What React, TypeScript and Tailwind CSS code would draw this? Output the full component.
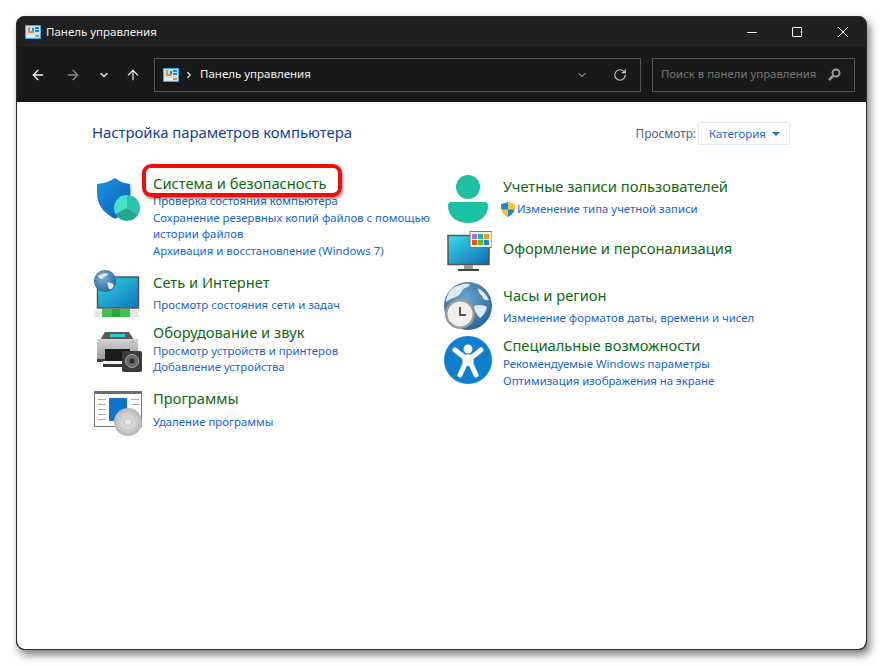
import { ArrowLeft, ArrowRight, ArrowUp, ChevronDown, ChevronRight, RotateCw } from "lucide-react"
import type { ReactNode } from "react"

// Small control panel glyph used in the title bar and address box
function PanelIcon() {
  return (
    <svg width="16" height="14" viewBox="0 0 16 14" className="block shrink-0">
      <rect x="0" y="0" width="16" height="14" fill="#3aa7ee" />
      <rect x="1" y="1" width="14" height="12" fill="#bfe6fb" />
      <rect x="3" y="2" width="2" height="6" fill="#e8912d" />
      <rect x="3" y="6" width="6" height="2" fill="#e8912d" />
      <rect x="7" y="3" width="2" height="3" fill="#2f7fc9" />
      <rect x="10" y="2" width="4" height="2" fill="#2f7fc9" />
      <rect x="10" y="5" width="4" height="2" fill="#2f7fc9" />
      <rect x="2" y="10" width="8" height="2" fill="#f4f4f4" />
      <rect x="10" y="10" width="4" height="2" fill="#e8912d" />
    </svg>
  )
}

function ShieldIcon() {
  return (
    <svg width="48" height="48" viewBox="0 0 48 48" className="block">
      <defs>
        <linearGradient id="sh" x1="0" y1="0" x2="1" y2="1">
          <stop offset="0" stopColor="#1b94e4" />
          <stop offset="1" stopColor="#0b5fb0" />
        </linearGradient>
      </defs>
      <path d="M21 3c4 3.500 9.500 5.500 15 6 0 0 .5 1 .5 9 0 14-7 21-15.500 26C12 39 3 32 3 18c0-8 0-9 0-9 7-.5 13-2.500 18-6z" fill="url(#sh)" />
      <path d="M33 33V20a13 13 0 0 1 11.260 19.500z" fill="#2cc4ac" />
      <path d="M33 33V20a13 13 0 0 0-11.260 19.500z" fill="#48e2cb" />
      <path d="M33 33l11.260 6.500A13 13 0 0 1 21.740 39.500z" fill="#1fa88f" />
    </svg>
  )
}

function NetworkIcon() {
  return (
    <svg width="48" height="48" viewBox="0 0 48 48" className="block">
      <defs>
        <linearGradient id="scr" x1="0" y1="0" x2="1" y2="1">
          <stop offset="0" stopColor="#33d3e6" />
          <stop offset="1" stopColor="#0f76b8" />
        </linearGradient>
        <radialGradient id="glb" cx="0.4" cy="0.35" r="0.7">
          <stop offset="0" stopColor="#7fb6d8" />
          <stop offset="1" stopColor="#235f94" />
        </radialGradient>
      </defs>
      <rect x="3.500" y="7" width="41" height="31" fill="url(#scr)" stroke="#555" strokeWidth="1.500" />
      <rect x="0" y="40" width="45" height="7" fill="#e6e6e6" />
      <rect x="8" y="39" width="28" height="8" fill="#3fc24f" />
      <rect x="18" y="39" width="8" height="8" fill="#2aa63b" />
      <circle cx="11" cy="11" r="11" fill="url(#glb)" />
      <path d="M4 6c3-2 8-4 10-2-1 3-5 2-6 5-2 0-3-1-4-3zM13 13c3-1 5 0 7 2-1 3-3 5-5 4z" fill="#e4eef5" />
    </svg>
  )
}

function PrinterIcon() {
  return (
    <svg width="48" height="48" viewBox="0 0 48 48" className="block">
      <defs>
        <linearGradient id="prn" x1="0" y1="0" x2="0" y2="1">
          <stop offset="0" stopColor="#d4d4d4" />
          <stop offset="1" stopColor="#9a9a9a" />
        </linearGradient>
      </defs>
      <path d="M11 4h24l5 8H6z" fill="#5a5a5a" />
      <rect x="16" y="6" width="15" height="3" fill="#35c9d4" />
      <rect x="3" y="11" width="41" height="20" fill="url(#prn)" />
      <rect x="11" y="21" width="25" height="12" fill="#1c1c1c" />
      <rect x="3" y="31" width="8" height="3" fill="#444" />
      <rect x="9" y="33" width="22" height="3" fill="#eee" />
      <rect x="9" y="36" width="24" height="3" fill="#333" />
      <circle cx="39" cy="14" r="1" fill="#3fc24f" />
      <rect x="28" y="23" width="20" height="21" rx="2" fill="#3b3b3b" />
      <circle cx="38" cy="33" r="6.500" fill="#6a6a6a" stroke="#a8a8a8" />
      <circle cx="38" cy="33" r="2.500" fill="#2a2a2a" />
    </svg>
  )
}

function ProgramsIcon() {
  return (
    <svg width="48" height="48" viewBox="0 0 48 48" className="block">
      <defs>
        <radialGradient id="cd" cx="0.5" cy="0.5" r="0.55">
          <stop offset="0" stopColor="#f0f0f0" />
          <stop offset="1" stopColor="#b0b0b0" />
        </radialGradient>
      </defs>
      <rect x="0.500" y="2.500" width="47" height="35" fill="#fff" stroke="#777" />
      <rect x="0" y="2" width="48" height="3" fill="#6e6e6e" />
      <g fill="#aaa">
        <rect x="4" y="10" width="8" height="1" />
        <rect x="4" y="15" width="8" height="1" />
        <rect x="4" y="20" width="8" height="1" />
        <rect x="4" y="25" width="8" height="1" />
        <rect x="4" y="30" width="8" height="1" />
        <rect x="37" y="10" width="8" height="1" />
        <rect x="37" y="15" width="8" height="1" />
      </g>
      <rect x="15" y="9" width="18" height="23" rx="1" fill="#0f73c9" />
      <circle cx="34" cy="33" r="14" fill="url(#cd)" />
      <circle cx="34" cy="33" r="4" fill="#e4e4e4" stroke="#bbb" />
    </svg>
  )
}

function UserIcon() {
  return (
    <svg width="48" height="48" viewBox="0 0 48 48" className="block">
      <circle cx="24" cy="12" r="12" fill="#1fbfa6" />
      <path d="M8 27h32c3 0 4 1 4 4 0 10-8 17-20 17S4 41 4 31c0-3 1-4 4-4z" fill="#1fbfa6" />
    </svg>
  )
}

function MonitorIcon() {
  return (
    <svg width="48" height="48" viewBox="0 0 48 48" className="block">
      <defs>
        <linearGradient id="mon" x1="0" y1="0" x2="1" y2="1">
          <stop offset="0" stopColor="#3adcec" />
          <stop offset="1" stopColor="#0f6bb5" />
        </linearGradient>
      </defs>
      <rect x="4" y="4.500" width="41" height="29" fill="url(#mon)" stroke="#555" strokeWidth="1.500" />
      <rect x="20" y="34" width="9" height="4" fill="#999" />
      <rect x="14" y="38" width="21" height="2" fill="#444" />
      <rect x="26" y="0.500" width="22" height="16" fill="#f4f4f4" stroke="#777" />
      <rect x="28" y="3" width="5" height="5" fill="#a36fd6" />
      <rect x="34" y="3" width="5" height="5" fill="#1fb29f" />
      <rect x="40" y="3" width="5" height="5" fill="#f09a1c" />
      <rect x="28" y="9" width="5" height="5" fill="#e8581c" />
      <rect x="34" y="9" width="5" height="5" fill="#6ab820" />
      <rect x="40" y="9" width="5" height="5" fill="#1a84d8" />
    </svg>
  )
}

function ClockIcon() {
  return (
    <svg width="48" height="48" viewBox="0 0 48 48" className="block">
      <defs>
        <radialGradient id="clg" cx="0.45" cy="0.35" r="0.75">
          <stop offset="0" stopColor="#6ba3cc" />
          <stop offset="1" stopColor="#1f5f96" />
        </radialGradient>
      </defs>
      <circle cx="24" cy="24" r="24" fill="url(#clg)" />
      <path d="M9 6c5-3 12-5 17-4-1 4-6 3-8 7s-5 6-9 7c-3 1-5 3-7 4 0-5 3-11 7-14zM34 6c5 3 9 7 11 12-4 1-6-1-7-4-2-2-4-4-4-8zM30 24c4-2 10-1 13 1-1 5-4 9-7 11-3-3-6-8-6-12z" fill="#dfe9f0" />
      <circle cx="16" cy="32" r="15" fill="#9a9a9a" />
      <circle cx="16" cy="32" r="12.500" fill="#f2efea" />
      <path d="M16 25v8h6" fill="none" stroke="#555" strokeWidth="2" />
    </svg>
  )
}

function AccessIcon() {
  return (
    <svg width="48" height="48" viewBox="0 0 48 48" className="block">
      <circle cx="24" cy="24" r="24" fill="#0f7fd0" />
      <circle cx="24" cy="13" r="4.500" fill="#fff" />
      <path d="M11 14l9 7h8l9-7" fill="none" stroke="#fff" strokeWidth="5" strokeLinecap="round" strokeLinejoin="round" />
      <path d="M21 21v7l-5 11M27 21v7l5 11" fill="none" stroke="#fff" strokeWidth="5" strokeLinecap="round" strokeLinejoin="round" />
      <rect x="20" y="20" width="8" height="10" fill="#fff" />
    </svg>
  )
}

function UacShield() {
  return (
    <svg width="14" height="15" viewBox="0 0 14 15" className="block shrink-0">
      <path d="M7 0c2 1.200 4 1.800 7 2 0 6-1 10-7 13C1 12 0 8 0 2c3-.2 5-.8 7-2z" fill="#1a86d8" />
      <path d="M7 0c2 1.200 4 1.800 7 2 0 2 0 4-.5 5.500H7z" fill="#fbc72e" />
      <path d="M7 7.500H.5C1.500 11 3 13 7 15z" fill="#fbc72e" />
    </svg>
  )
}

function Category({
  icon,
  title,
  iconClass,
  className,
  gapClass,
  children,
}: {
  icon: ReactNode
  title: string
  iconClass: string
  className: string
  gapClass: string
  children: ReactNode
}) {
  return (
    <div className={`flex items-start ${className}`}>
      {/* zero height so the picture does not push the row */}
      <div className="w-[59px] h-0 shrink-0">
        <div className={iconClass}>{icon}</div>
      </div>
      <div className="flex-1 min-w-0">
        <div className="text-[14.7px] leading-[20px] text-[#0b6b12]">{title}</div>
        <div className={`text-[#1565cf] text-[11.4px] leading-[16.7px] ${gapClass}`}>{children}</div>
      </div>
    </div>
  )
}

export default function App() {
  return (
    <div
      className="w-[883px] h-[666px] bg-white pt-4 pl-4 overflow-hidden"
      style={{ fontFamily: '"Noto Sans", "Open Sans", sans-serif' }}
    >
      <div className="relative w-[851px] h-[634px] bg-[#202020] border border-[#2a2a2a] rounded-lg shadow-[3px_5px_9px_rgba(0,0,0,0.5)] flex flex-col overflow-hidden">
        {/* Title bar */}
        <div className="h-[30px] shrink-0 flex items-center pl-2 text-white">
          <PanelIcon />
          <span className="ml-[5px] text-[11.5px] text-[#f0f0f0]">Панель управления</span>
          <div className="ml-auto flex items-center pr-[18px]">
            <div className="w-[10px] h-px bg-white mr-[35px] mt-px" />
            <div className="w-[10px] h-[10px] border border-white rounded-[1px] mr-[36px]" />
            <svg width="10" height="10" viewBox="0 0 10 10" className="block">
              <path d="M0 0l10 10M10 0L0 10" stroke="#fff" strokeWidth="1" />
            </svg>
          </div>
        </div>

        {/* Toolbar */}
        <div className="h-[55px] shrink-0 bg-[#191919] flex items-center pl-[13px]">
          <ArrowLeft size={16} color="#f2f2f2" strokeWidth={2} />
          <ArrowRight size={16} color="#8a8a8a" strokeWidth={2} className="ml-[19px]" />
          <ChevronDown size={12} color="#d8d8d8" strokeWidth={3} className="ml-[17px]" />
          <ArrowUp size={16} color="#f2f2f2" strokeWidth={1.75} className="ml-[15px]" />
          <div className="ml-[13px] w-[487px] h-[34px] border border-[#555] flex items-center pl-2 pr-[13px]">
            <PanelIcon />
            <ChevronRight size={10} color="#e0e0e0" strokeWidth={3} className="ml-[5px]" />
            <span className="ml-[6px] mb-[2px] text-[11.5px] text-[#f0f0f0]">Панель управления</span>
            <ChevronDown size={12} color="#cfcfcf" strokeWidth={2} className="ml-auto mr-[25px]" />
            <RotateCw size={14} color="#c8c8c8" strokeWidth={2} />
          </div>
          <div className="ml-[11px] w-[203px] h-[34px] border border-[#555] flex items-center pl-2 pr-[13px]">
            <span className="mb-[2px] text-[11.4px] text-[#767676] whitespace-nowrap">Поиск в панели управления</span>
            <svg width="13" height="13" viewBox="0 0 13 13" className="block ml-auto">
              <circle cx="8" cy="5" r="3.500" fill="none" stroke="#9a9a9a" strokeWidth="2" />
              <path d="M5.500 7.500L1 12" stroke="#9a9a9a" strokeWidth="2.500" />
            </svg>
          </div>
        </div>

        {/* Content */}
        <div className="flex-1 bg-white rounded-b-lg pl-[75px] pr-[76px]">
          <div className="flex items-center justify-between mt-5 h-[23px]">
            <div className="mb-[2px] text-[14.85px] text-[#0f3f9c]">Настройка параметров компьютера</div>
            <div className="flex items-center">
              <span className="text-[11.8px] text-[#4d6082]">Просмотр:</span>
              <div className="ml-[2px] w-[92px] h-[23px] border border-[#dbe6f6] rounded-[2px] flex items-center pl-[10px]">
                <span className="text-[11.4px] text-[#2b62d9]">Категория</span>
                <div className="ml-[6px] w-0 h-0 border-x-[4px] border-x-transparent border-t-[4px] border-t-[#1a6fe0]" />
              </div>
            </div>
          </div>

          <div className="flex mt-[28px]">
            {/* Left column */}
            <div className="w-[352px] pl-[2px]">
              <Category
                icon={<ShieldIcon />}
                title="Система и безопасность"
                iconClass="mt-[2px]"
                className=""
                gapClass="pr-[6px]"
              >
                <div>Проверка состояния компьютера</div>
                <div>Сохранение резервных копий файлов с помощью истории файлов</div>
                <div>Архивация и восстановление (Windows 7)</div>
              </Category>
              <Category
                icon={<NetworkIcon />}
                title="Сеть и Интернет"
                iconClass="-mt-[2px]"
                className="mt-[12px]"
                gapClass="mt-[5px]"
              >
                <div>Просмотр состояния сети и задач</div>
              </Category>
              <Category
                icon={<PrinterIcon />}
                title="Оборудование и звук"
                iconClass="mt-[6px]"
                className="mt-[8px]"
                gapClass="mt-[1px]"
              >
                <div>Просмотр устройств и принтеров</div>
                <div>Добавление устройства</div>
              </Category>
              <Category
                icon={<ProgramsIcon />}
                title="Программы"
                iconClass="mt-[1px]"
                className="mt-[12px]"
                gapClass="mt-[6px]"
              >
                <div>Удаление программы</div>
              </Category>
            </div>

            {/* Right column */}
            <div className="flex-1 mt-[3px]">
              <Category
                icon={<UserIcon />}
                title="Учетные записи пользователей"
                iconClass="-mt-[1px]"
                className=""
                gapClass="mt-[5px]"
              >
                <div className="flex items-center gap-[2px] -ml-[2px]">
                  <UacShield />
                  <span>Изменение типа учетной записи</span>
                </div>
              </Category>
              <Category
                icon={<MonitorIcon />}
                title="Оформление и персонализация"
                iconClass="-mt-[7px]"
                className="mt-[20px]"
                gapClass=""
              >
                {null}
              </Category>
              <Category
                icon={<ClockIcon />}
                title="Часы и регион"
                iconClass="-mt-[3px]"
                className="mt-[27px]"
                gapClass="mt-[5px]"
              >
                <div>Изменение форматов даты, времени и чисел</div>
              </Category>
              <Category
                icon={<AccessIcon />}
                title="Специальные возможности"
                iconClass="mt-[1px]"
                className="mt-[9px]"
                gapClass="mt-[1px]"
              >
                <div>Рекомендуемые Windows параметры</div>
                <div>Оптимизация изображения на экране</div>
              </Category>
            </div>
          </div>
        </div>

        {/* Red annotation round the first category title */}
        <div className="absolute left-[125px] top-[147px] w-[200px] h-[33px] border-[4px] border-[#f20d0d] rounded-[9px] shadow-[1px_2px_3px_rgba(0,0,0,0.45)]" />
      </div>
    </div>
  )
}
